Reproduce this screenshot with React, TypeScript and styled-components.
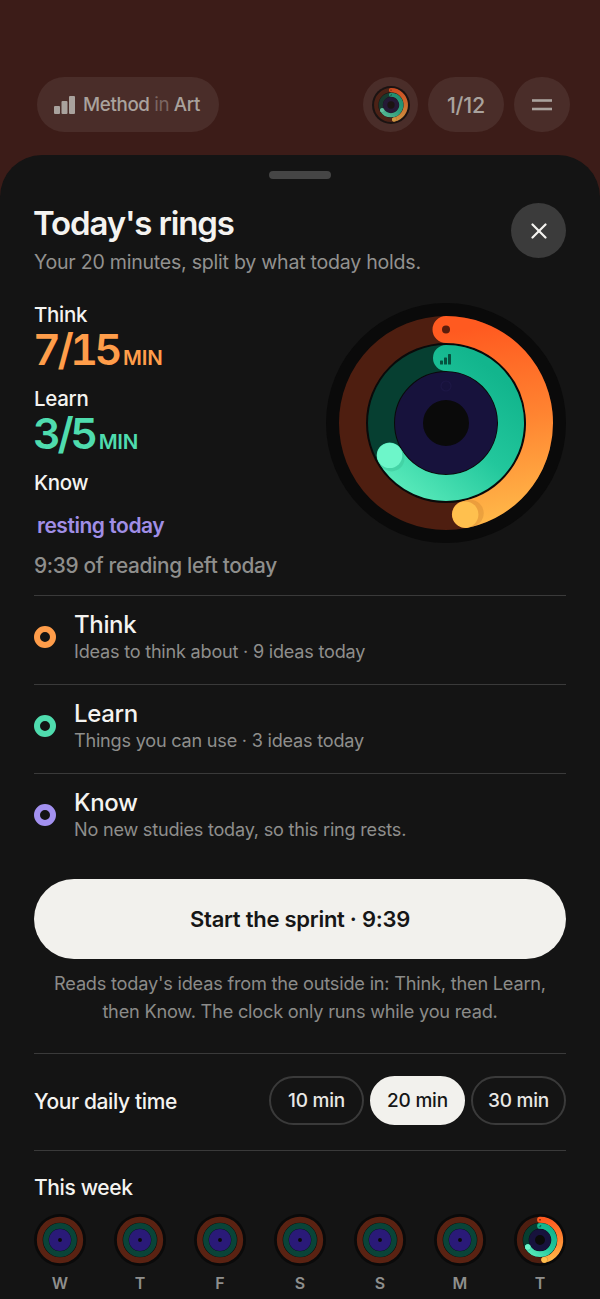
import React from "react";
import styled, { createGlobalStyle } from "styled-components";

const GlobalStyle = createGlobalStyle`
  html, body { margin: 0; padding: 0; background: #3c1c18; }
  body { font-family: Inter, "Noto Sans", sans-serif; -webkit-font-smoothing: antialiased; }
  * { box-sizing: border-box; }
`;

const Page = styled.div`
  width: 600px;
  height: 1299px;
  overflow: hidden;
  padding-top: 77px;
  background: #3c1c18;
`;

const TopBar = styled.header`
  display: flex;
  align-items: center;
  justify-content: space-between;
  height: 55px;
  padding-left: 37px;
  padding-right: 30px;
`;

const BrandPill = styled.div`
  display: flex;
  align-items: center;
  gap: 8px;
  width: 182px;
  height: 55px;
  padding-left: 17px;
  border-radius: 28px;
  background: #4a2d29;
  color: #a9a29d;
  font-size: 18.8px;
  font-weight: 500;
  letter-spacing: -0.02em;
`;

const Faint = styled.span`
  color: #7b6662;
  font-weight: 400;
`;

const TopActions = styled.div`
  display: flex;
  gap: 10px;
`;

const RoundButton = styled.div<{ $width: number }>`
  display: flex;
  align-items: center;
  justify-content: center;
  width: ${(p) => p.$width}px;
  height: 55px;
  border-radius: 28px;
  background: #4a2d29;
  color: #a9a29d;
  font-size: 21.5px;
  font-weight: 500;
  letter-spacing: -0.01em;
`;

const Dimmed = styled.div`
  display: flex;
  opacity: 0.72;
`;

const Sheet = styled.main`
  height: 1144px;
  margin-top: 23px;
  padding: 16px 34px 0;
  background: #141414;
  border-radius: 42px 42px 0 0;
  color: #f4f3f0;
`;

const Handle = styled.div`
  width: 62px;
  height: 8px;
  margin: 0 auto;
  border-radius: 4px;
  background: #454545;
`;

const SheetHead = styled.div`
  display: flex;
  justify-content: space-between;
  align-items: flex-start;
  margin-top: 24px;
`;

const Title = styled.h1`
  margin: 0 0 0 -1px;
  font-size: 33px;
  line-height: 40px;
  font-weight: 600;
  letter-spacing: -0.035em;
`;

const Subtitle = styled.p`
  margin: 5px 0 0;
  font-size: 19.6px;
  line-height: 28px;
  color: #92918f;
  letter-spacing: -0.013em;
`;

const CloseButton = styled.div`
  display: flex;
  align-items: center;
  justify-content: center;
  width: 55px;
  height: 55px;
  border-radius: 50%;
  background: #3b3b3b;
`;

const StatsRow = styled.section`
  display: flex;
  justify-content: space-between;
  margin-top: 27px;
  margin-bottom: 15px;
`;

const Stats = styled.div`
  display: flex;
  flex-direction: column;
`;

const StatLabel = styled.div<{ $gap?: number }>`
  margin-top: ${(p) => p.$gap ?? 0}px;
  font-size: 20.5px;
  line-height: 24px;
  font-weight: 500;
  letter-spacing: -0.015em;
`;

const StatValue = styled.div<{ $color: string }>`
  display: flex;
  align-items: baseline;
  gap: 4px;
  height: 44px;
  margin-left: -1px;
  color: ${(p) => p.$color};
  font-size: 43px;
  line-height: 44px;
  font-weight: 600;
  letter-spacing: -0.08em;
  font-variant-numeric: tabular-nums;
`;

const StatUnit = styled.span`
  font-size: 20.5px;
  font-weight: 600;
  letter-spacing: -0.01em;
`;

const Resting = styled.div`
  margin-top: 17px;
  padding-left: 3px;
  font-size: 21px;
  line-height: 28px;
  font-weight: 600;
  color: #a08ee6;
  letter-spacing: -0.022em;
`;

const TimeLeft = styled.div`
  margin-top: 12px;
  font-size: 20.8px;
  line-height: 28px;
  font-weight: 500;
  color: #8f8f8d;
  letter-spacing: -0.015em;
`;

const RingRow = styled.div`
  display: flex;
  align-items: center;
  gap: 18px;
  padding: 14px 0 21px;
  border-top: 1px solid #3a3a3a;
`;

const RingDot = styled.span<{ $color: string }>`
  flex: none;
  width: 22px;
  height: 22px;
  border: 6px solid ${(p) => p.$color};
  border-radius: 50%;
  background: #141414;
`;

const RowTitle = styled.div`
  font-size: 24px;
  line-height: 29px;
  font-weight: 500;
  letter-spacing: -0.015em;
`;

const RowText = styled.div`
  font-size: 18.1px;
  line-height: 24px;
  color: #8e8e8c;
  letter-spacing: -0.012em;
`;

const StartButton = styled.button`
  display: block;
  width: 100%;
  height: 80px;
  margin-top: 17px;
  border: none;
  border-radius: 40px;
  background: #f2f1ed;
  color: #161616;
  font-family: inherit;
  font-size: 22px;
  font-weight: 600;
  letter-spacing: -0.012em;
`;

const Note = styled.p`
  margin: 10px 0 28px;
  text-align: center;
  font-size: 18.2px;
  line-height: 28px;
  color: #8b8b89;
  letter-spacing: -0.012em;
`;

const TimeRow = styled.div`
  display: flex;
  align-items: center;
  justify-content: space-between;
  padding: 22px 0 25px;
  border-top: 1px solid #3a3a3a;
  border-bottom: 1px solid #3a3a3a;
`;

const TimeLabel = styled.div`
  padding-top: 2px;
  font-size: 21px;
  font-weight: 500;
  letter-spacing: -0.018em;
`;

const TimeOptions = styled.div`
  display: flex;
  gap: 6px;
`;

const TimeOption = styled.div<{ $active?: boolean }>`
  display: flex;
  align-items: center;
  justify-content: center;
  width: 95px;
  height: 49px;
  border-radius: 25px;
  border: 2px solid ${(p) => (p.$active ? "#f2f1ed" : "#3a3a3a")};
  background: ${(p) => (p.$active ? "#f2f1ed" : "transparent")};
  color: ${(p) => (p.$active ? "#161616" : "#e9e8e5")};
  font-size: 19px;
  font-weight: 500;
  letter-spacing: -0.012em;
`;

const WeekTitle = styled.h2`
  margin: 23px 0 0;
  font-size: 21px;
  line-height: 28px;
  font-weight: 500;
  letter-spacing: -0.018em;
`;

const WeekRow = styled.div`
  display: flex;
  justify-content: space-between;
  margin-top: 12px;
`;

const Day = styled.div`
  display: flex;
  flex-direction: column;
  align-items: center;
  width: 52px;
`;

const DayLetter = styled.div`
  margin-top: 7px;
  font-size: 16px;
  line-height: 20px;
  font-weight: 600;
  color: #8f8f8d;
`;

const CX = 120;
const CY = 120;

const arcPath = (r: number, deg: number) => {
  const a = (deg * Math.PI) / 180;
  const x = CX + r * Math.sin(a);
  const y = CY - r * Math.cos(a);
  return `M ${CX} ${CY - r} A ${r} ${r} 0 ${deg > 180 ? 1 : 0} 1 ${x} ${y}`;
};

const capPoint = (r: number, deg: number) => {
  const a = (deg * Math.PI) / 180;
  return { x: CX + r * Math.sin(a), y: CY - r * Math.cos(a) };
};

interface RingsProps {
  size: number;
  uid: string;
  progress?: boolean;
  bright?: boolean;
}

const Rings = ({ size, uid, progress, bright }: RingsProps) => {
  const orangeEnd = capPoint(93.5, 168);
  const greenEnd = capPoint(65, 240);
  const orangeShadow = capPoint(93.5, 165);
  const greenShadow = capPoint(65, 237);
  const track = bright
    ? { o: "#5a2212", g: "#0a4438", p: "#2a1a78" }
    : { o: "#4e1e10", g: "#063f31", p: "#17123c" };

  return (
    <svg width={size} height={size} viewBox="0 0 240 240">
      <defs>
        <linearGradient id={`${uid}-o`} gradientUnits="userSpaceOnUse" x1="140" y1="26" x2="170" y2="215">
          <stop offset="0" stopColor="#ff5a20" />
          <stop offset="0.5" stopColor="#ff8431" />
          <stop offset="1" stopColor="#ffb648" />
        </linearGradient>
        <linearGradient id={`${uid}-g`} gradientUnits="userSpaceOnUse" x1="170" y1="70" x2="70" y2="190">
          <stop offset="0" stopColor="#12b58d" />
          <stop offset="0.45" stopColor="#22c79c" />
          <stop offset="1" stopColor="#5cecbc" />
        </linearGradient>
      </defs>
      <circle cx={CX} cy={CY} r={120} fill="#0a0a0a" />
      <circle cx={CX} cy={CY} r={93.5} fill="none" stroke={track.o} strokeWidth={27} />
      <circle cx={CX} cy={CY} r={65} fill="none" stroke={track.g} strokeWidth={26} />
      <circle cx={CX} cy={CY} r={bright ? 30 : 37} fill="none" stroke={track.p} strokeWidth={bright ? 42 : 28} />
      {progress && (
        <>
          <path d={arcPath(93.5, 168)} fill="none" stroke={`url(#${uid}-o)`} strokeWidth={27} strokeLinecap="round" />
          <circle cx={orangeShadow.x} cy={orangeShadow.y} r={13.5} fill="#d98f35" opacity={0.5} />
          <circle cx={orangeEnd.x} cy={orangeEnd.y} r={13} fill="#ffc04e" />
          <circle cx={CX} cy={CY - 93.5} r={4} fill="#5a1d0c" />
          <path d={arcPath(65, 240)} fill="none" stroke={`url(#${uid}-g)`} strokeWidth={26} strokeLinecap="round" />
          <circle cx={greenShadow.x} cy={greenShadow.y} r={13} fill="#3fc99d" opacity={0.6} />
          <circle cx={greenEnd.x} cy={greenEnd.y} r={12.6} fill="#6df6c9" />
          <g fill="#06513f">
            <rect x={114} y={57.5} width={3} height={4} rx={0.6} />
            <rect x={118} y={54.5} width={3} height={7} rx={0.6} />
            <rect x={122} y={51} width={3} height={10.5} rx={0.6} />
          </g>
          <circle cx={CX} cy={83} r={5} fill="none" stroke="#1d1745" strokeWidth={1.2} />
        </>
      )}
    </svg>
  );
};

const BarsIcon = () => (
  <svg width="21" height="18" viewBox="0 0 21 18" fill="#a9a29d">
    <rect x="0" y="10" width="6" height="8" rx="1" />
    <rect x="7.5" y="5" width="6" height="13" rx="1" />
    <rect x="15" y="0" width="6" height="18" rx="1" />
  </svg>
);

const MenuIcon = () => (
  <svg width="20" height="12" viewBox="0 0 20 12" stroke="#a9a29d" strokeWidth="2.6">
    <line x1="0" y1="1.5" x2="20" y2="1.5" />
    <line x1="0" y1="10" x2="20" y2="10" />
  </svg>
);

const CloseIcon = () => (
  <svg width="16" height="16" viewBox="0 0 16 16" stroke="#f4f3f0" strokeWidth="2.2" strokeLinecap="round">
    <line x1="1.5" y1="1.5" x2="14.5" y2="14.5" />
    <line x1="14.5" y1="1.5" x2="1.5" y2="14.5" />
  </svg>
);

const days = ["W", "T", "F", "S", "S", "M", "T"];

const rows = [
  { title: "Think", text: "Ideas to think about · 9 ideas today", color: "#ff9d4a" },
  { title: "Learn", text: "Things you can use · 3 ideas today", color: "#4fdcae" },
  { title: "Know", text: "No new studies today, so this ring rests.", color: "#a391f0" },
];

export default function App() {
  return (
    <Page>
      <GlobalStyle />
      <TopBar>
        <BrandPill>
          <BarsIcon />
          <span>
            Method <Faint>in</Faint> Art
          </span>
        </BrandPill>
        <TopActions>
          <RoundButton $width={55}>
            <Dimmed>
              <Rings size={38} uid="top" progress />
            </Dimmed>
          </RoundButton>
          <RoundButton $width={76}>1/12</RoundButton>
          <RoundButton $width={56}>
            <MenuIcon />
          </RoundButton>
        </TopActions>
      </TopBar>

      <Sheet>
        <Handle />
        <SheetHead>
          <div>
            <Title>Today's rings</Title>
            <Subtitle>Your 20 minutes, split by what today holds.</Subtitle>
          </div>
          <CloseButton>
            <CloseIcon />
          </CloseButton>
        </SheetHead>

        <StatsRow>
          <Stats>
            <StatLabel>Think</StatLabel>
            <StatValue $color="#ff9d4a">
              7/15<StatUnit>MIN</StatUnit>
            </StatValue>
            <StatLabel $gap={16}>Learn</StatLabel>
            <StatValue $color="#4fdcae">
              3/5<StatUnit>MIN</StatUnit>
            </StatValue>
            <StatLabel $gap={16}>Know</StatLabel>
            <Resting>resting today</Resting>
            <TimeLeft>9:39 of reading left today</TimeLeft>
          </Stats>
          <Rings size={240} uid="main" progress />
        </StatsRow>

        {rows.map((row) => (
          <RingRow key={row.title}>
            <RingDot $color={row.color} />
            <div>
              <RowTitle>{row.title}</RowTitle>
              <RowText>{row.text}</RowText>
            </div>
          </RingRow>
        ))}

        <StartButton>Start the sprint · 9:39</StartButton>
        <Note>
          Reads today's ideas from the outside in: Think, then Learn,
          <br />
          then Know. The clock only runs while you read.
        </Note>

        <TimeRow>
          <TimeLabel>Your daily time</TimeLabel>
          <TimeOptions>
            <TimeOption>10 min</TimeOption>
            <TimeOption $active>20 min</TimeOption>
            <TimeOption>30 min</TimeOption>
          </TimeOptions>
        </TimeRow>

        <WeekTitle>This week</WeekTitle>
        <WeekRow>
          {days.map((d, i) => (
            <Day key={i}>
              <Rings size={52} uid={`day${i}`} progress={i === 6} bright={i !== 6} />
              <DayLetter>{d}</DayLetter>
            </Day>
          ))}
        </WeekRow>
      </Sheet>
    </Page>
  );
}
